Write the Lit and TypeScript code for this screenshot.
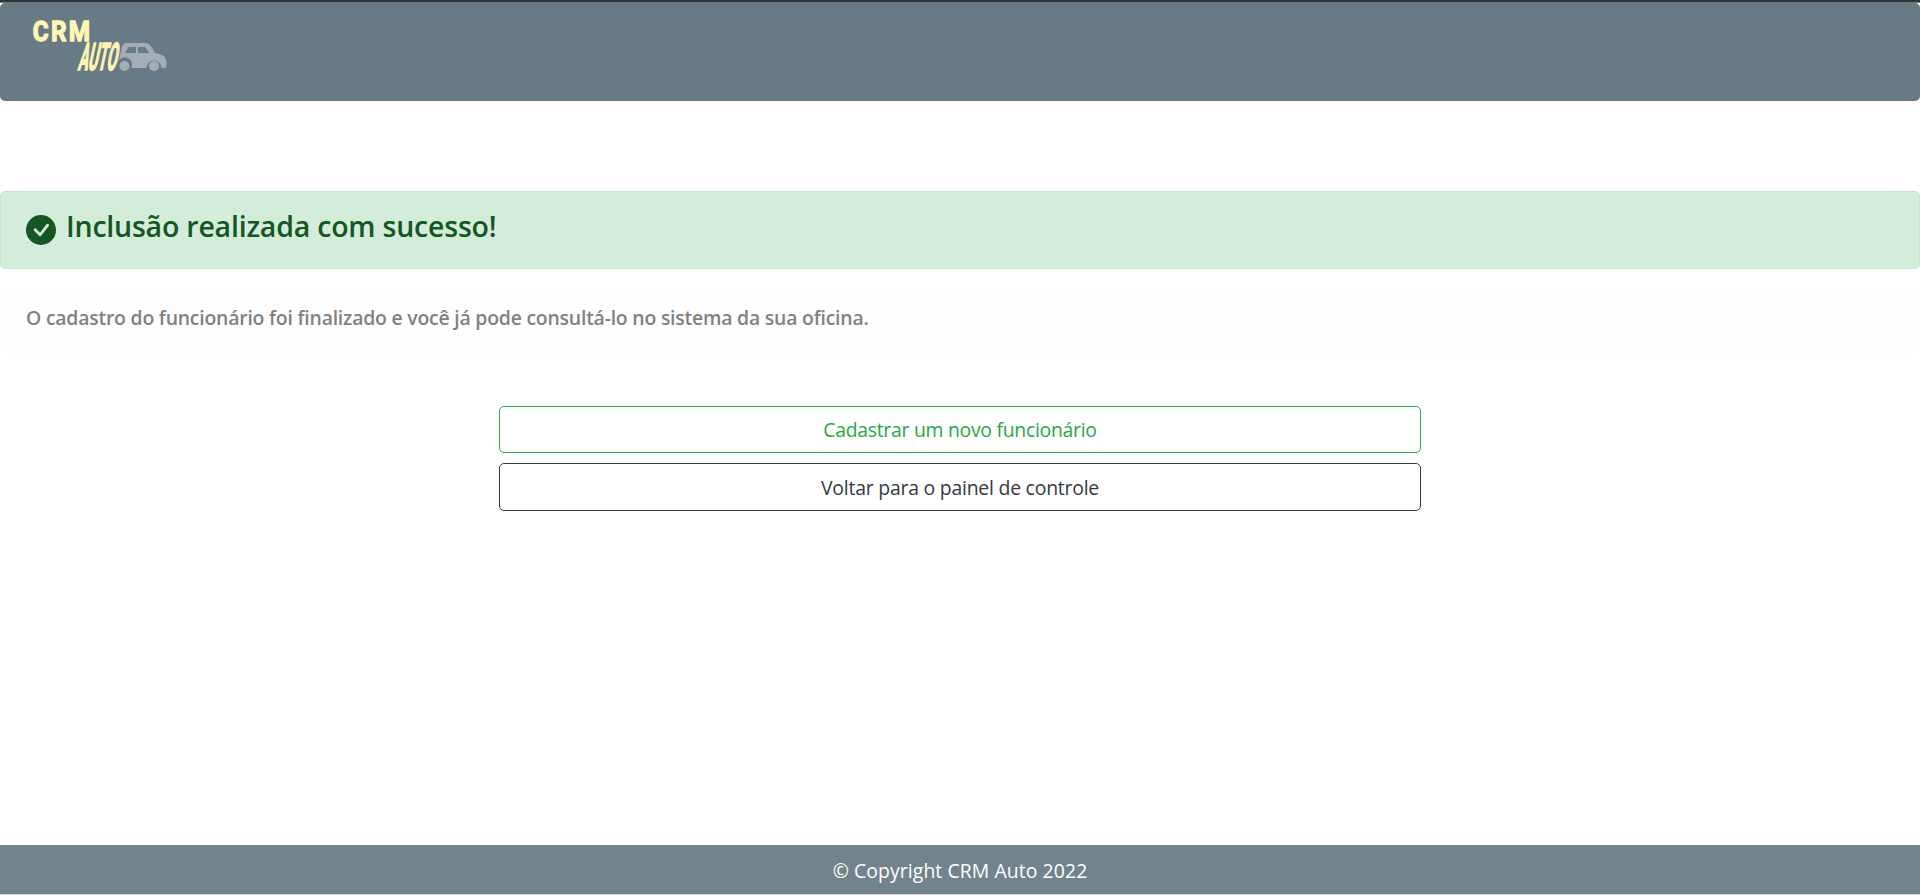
import { LitElement, html, css } from "lit";
import { customElement } from "lit/decorators.js";

@customElement("app-root")
export class AppRoot extends LitElement {
  static styles = css`
    :host {
      display: flex;
      flex-direction: column;
      box-sizing: border-box;
      height: 895px;
      border-top: 2px solid #333536;
      border-bottom: 1px solid #d3d8e0;
      background: #fff;
      font-family: "Open Sans", "Noto Sans", sans-serif;
      font-size: 19.4px;
      line-height: 30px;
      overflow: hidden;
    }
    * { box-sizing: border-box; }
    .edge { flex: none; height: 1px; background: #667681; }
    header {
      flex: none;
      height: 98px;
      border-radius: 5px;
      background: #687a85;
      padding: 3px 20px;
    }
    .logo { display: block; overflow: visible; }
    .alert {
      flex: none;
      border: 1px solid #c3e6cb;
      border-radius: 5px;
      background: #d4edda;
      color: #155724;
      margin-top: 90px;
      height: 78px;
      padding: 15px 25px;
      display: flex;
      gap: 10px;
    }
    .alert svg { margin-top: 8px; flex: none; }
    h2 {
      margin: 0;
      font-size: 28.5px;
      font-weight: 600;
      line-height: 38px;
      letter-spacing: -0.21px;
      white-space: nowrap;
    }
    .note {
      flex: none;
      margin-top: 20px;
      height: 67px;
      border: 1px solid #fdfdfe;
      border-radius: 5px;
      background: #fefefe;
      color: #818182;
      padding: 13px 25px;
      font-weight: 600;
      letter-spacing: -0.21px;
    }
    .actions {
      flex: 1;
      width: 922px;
      margin: 50px auto 0;
      display: flex;
      flex-direction: column;
      gap: 10px;
    }
    button {
      height: 47px;
      border: 1px solid #28a745;
      border-radius: 5px;
      background: transparent;
      color: #28a745;
      font: inherit;
      letter-spacing: -0.28px;
      padding: 0;
    }
    .dark {
      height: 48px;
      border-color: #343a40;
      color: #343a40;
      letter-spacing: -0.22px;
      padding-top: 1px;
    }
    footer {
      flex: none;
      height: 49px;
      background: #73838c;
      color: #fff;
      text-align: center;
      padding-top: 11px;
      letter-spacing: 0.08px;
    }
  `;

  render() {
    return html`
      <div class="edge"></div>
      <header>
        <svg class="logo" width="160" height="90" viewBox="20 6 160 90">
          <path fill="#a4adb4" fill-rule="evenodd" d="M126 43H145Q149 43 150.500 45.500L155 53Q166 54 166.500 62V66Q166.500 68 164 68H161.500A7.500 7.500 0 1 0 146.500 68H131.500A7.500 7.500 0 0 0 119 60L122 47Q123 43 126 43ZM130 47Q128.500 47 128 48L125 53H136V47ZM138 47V53H149L146 48Q145.500 47 144 47Z"/>
          <circle cx="124.500" cy="66" r="5" fill="#a4adb4"/>
          <circle cx="154" cy="66" r="5" fill="#a4adb4"/>
          <g fill="#fdf6b5" stroke="#fdf6b5" stroke-linejoin="round" font-family="Roboto, sans-serif" font-weight="700">
            <text transform="translate(32.800 41.300) scale(0.870 1)" font-size="28" stroke-width="1.300" letter-spacing="2.500">CRM</text>
            <text transform="translate(77.500 70.400) skewX(-12) scale(0.385 1)" font-size="38" stroke-width="1.600">AUTO</text>
          </g>
        </svg>
      </header>
      <main class="alert" role="alert">
        <svg width="30" height="30" viewBox="0 0 16 16" fill="#155724">
          <path d="M16 8A8 8 0 1 1 0 8a8 8 0 0 1 16 0zm-3.970-3.030a.75.75 0 0 0-1.080.022L7.477 9.417 5.384 7.323a.75.75 0 0 0-1.060 1.060L6.970 11.030a.75.75 0 0 0 1.079-.020l3.992-4.990a.75.75 0 0 0-.010-1.050z"/>
        </svg>
        <h2>Inclusão realizada com sucesso!</h2>
      </main>
      <div class="note">O cadastro do funcionário foi finalizado e você já pode consultá-lo no sistema da sua oficina.</div>
      <div class="actions">
        <button>Cadastrar um novo funcionário</button>
        <button class="dark">Voltar para o painel de controle</button>
      </div>
      <footer>© Copyright CRM Auto 2022</footer>
    `;
  }
}
